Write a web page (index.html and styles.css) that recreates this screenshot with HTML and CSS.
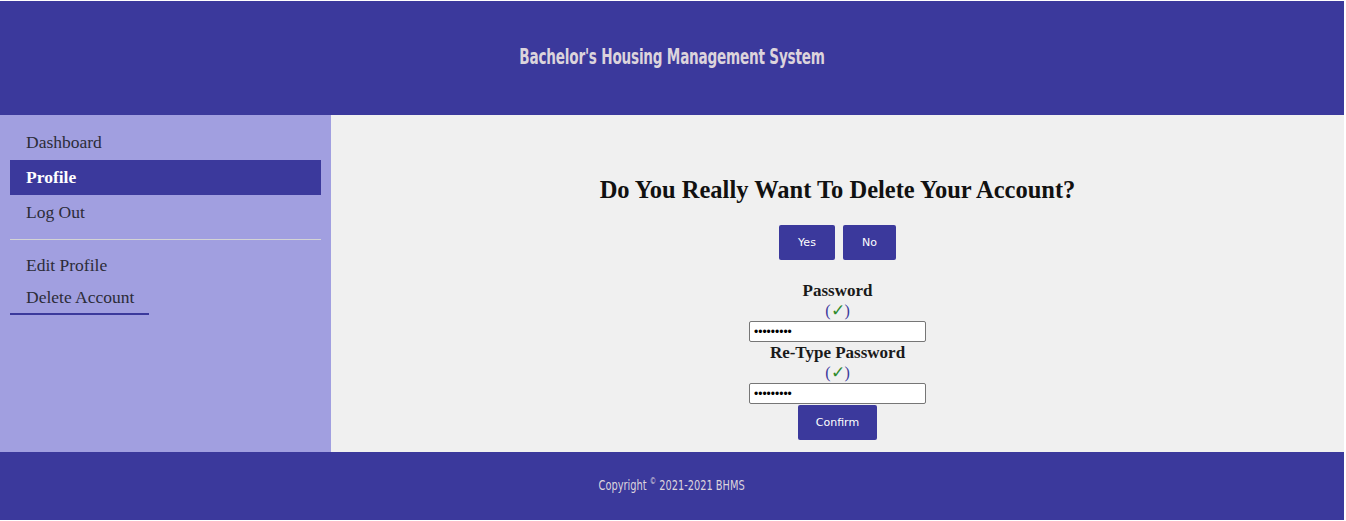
FILE: index.html
```html
<!DOCTYPE html>
<html lang="en">
<head>
<meta charset="utf-8">
<title>BHMS - Delete Account</title>
<link rel="stylesheet" href="styles.css">
</head>
<body>
<div class="page">
  <header class="top">
    <h1 class="brand">Bachelor's Housing Management System</h1>
  </header>
  <div class="middle">
    <nav class="side">
      <a class="nav-item" href="#">Dashboard</a>
      <a class="nav-item active" href="#">Profile</a>
      <a class="nav-item" href="#">Log Out</a>
      <hr class="divider">
      <a class="sub-item" href="#">Edit Profile</a>
      <a class="sub-item current" href="#">Delete Account</a>
    </nav>
    <main class="content">
      <h2 class="question">Do You Really Want To Delete Your Account?</h2>
      <div class="choices">
        <button class="btn btn-yes" type="button">Yes</button>
        <button class="btn btn-no" type="button">No</button>
      </div>
      <form class="pw-form">
        <label class="pw-label" for="pw1">Password</label>
        <span class="ok">(<span class="tick">&#10003;</span>)</span>
        <input class="pw-input" id="pw1" type="password" value="123456789">
        <label class="pw-label" for="pw2">Re-Type Password</label>
        <span class="ok">(<span class="tick">&#10003;</span>)</span>
        <input class="pw-input" id="pw2" type="password" value="123456789">
        <button class="btn btn-confirm" type="button">Confirm</button>
      </form>
    </main>
  </div>
  <footer class="bottom">
    <p class="copy">Copyright <sup class="c">&copy;</sup> 2021-2021 BHMS</p>
  </footer>
</div>
</body>
</html>
```
FILE: styles.css
```css
html, body {
  margin: 0;
  padding: 0;
  background: #ffffff;
}
body {
  padding: 1px 2px 1px 0;
}
.page {
  display: flex;
  flex-direction: column;
  height: 519px;
}
.top {
  height: 114px;
  background: #3b399c;
  display: flex;
  align-items: center;
  justify-content: center;
}
.brand {
  margin: 0 0 2px 0;
  font-family: "DejaVu Sans Condensed", "DejaVu Sans", sans-serif;
  font-stretch: condensed;
  font-weight: bold;
  font-size: 21px;
  letter-spacing: -0.3px;
  color: #dcd4dc;
  transform: scaleX(0.72);
}
.middle {
  display: flex;
  height: 337px;
}
.side {
  width: 311px;
  background: #a19fe0;
  padding: 10px 10px 0 10px;
  display: flex;
  flex-direction: column;
  font-family: "Liberation Serif", serif;
  font-size: 17.5px;
}
.nav-item {
  display: block;
  height: 35px;
  line-height: 35px;
  padding-left: 16px;
  color: #2c2c38;
  text-decoration: none;
}
.nav-item.active {
  background: #3b399c;
  color: #ffffff;
  font-weight: bold;
}
.divider {
  margin: 9px 0 9px 0;
  border: 0;
  border-top: 1px solid #d4d4d4;
  height: 0;
}
.sub-item {
  display: block;
  width: max-content;
  padding: 4px 16px 4px 16px;
  color: #2c2c38;
  text-decoration: none;
  line-height: 24px;
  white-space: nowrap;
}
.sub-item.current {
  box-sizing: border-box;
  width: 139px;
  padding-right: 0;
  border-bottom: 2px solid #3b399c;
  padding-bottom: 4px;
}
.content {
  flex: 1;
  background: #f0f0f0;
  display: flex;
  flex-direction: column;
  align-items: center;
  padding-top: 58px;
}
.question {
  margin: 0;
  font-family: "Liberation Serif", serif;
  font-weight: bold;
  font-size: 24.5px;
  line-height: 34px;
  color: #111;
}
.choices {
  display: flex;
  gap: 8px;
  margin-top: 18px;
}
.btn {
  background: #3b399c;
  color: #ffffff;
  border: 0;
  border-radius: 2px;
  font-family: "DejaVu Sans", sans-serif;
  font-size: 11px;
  height: 35px;
  padding: 0;
}
.btn-yes { width: 56px; }
.btn-no { width: 53px; }
.pw-form {
  display: flex;
  flex-direction: column;
  align-items: center;
  margin-top: 20px;
  font-family: "Liberation Serif", serif;
}
.pw-label {
  font-size: 17px;
  font-weight: bold;
  line-height: 21px;
  color: #1a1a1a;
}
.ok {
  font-size: 16px;
  line-height: 20px;
  color: #3b399c;
}
.tick {
  color: #2e8b2e;
  font-size: 17px;
}
.pw-input {
  width: 177px;
  height: 21px;
  box-sizing: border-box;
  border: 1px solid #767676;
  border-radius: 2px;
  background: #fff;
  padding: 0 4px;
  font-size: 12px;
}
.btn-confirm {
  width: 79px;
  margin-top: 1px;
}
.bottom {
  flex: 1;
  background: #3b399c;
  display: flex;
  align-items: center;
  justify-content: center;
}
.copy {
  margin: 0 0 4px 0;
  font-family: "DejaVu Sans Condensed", "DejaVu Sans", sans-serif;
  font-stretch: condensed;
  font-size: 14px;
  color: #dcd4dc;
  transform: scaleX(0.78);
}
.c {
  font-size: 9px;
}
```
